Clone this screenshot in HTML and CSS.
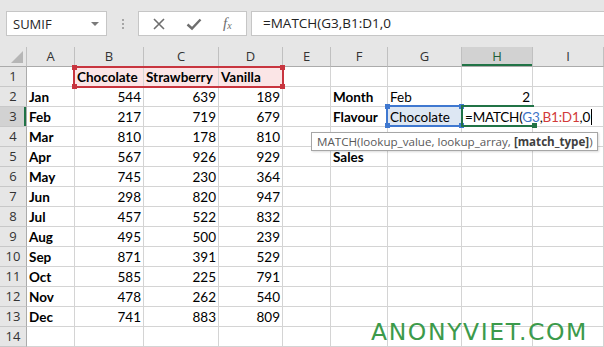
FILE: index.html
```html
<!DOCTYPE html>
<html lang="en">
<head>
  <meta charset="UTF-8">
  <title>MATCH</title>
  <link rel="stylesheet" href="styles.css">
</head>
<body>
  <!-- Formula bar -->
  <div class="formula-bar">
    <div class="name-box">
      <span>SUMIF</span>
      <span class="caret-down"></span>
    </div>
    <div class="grip"><i></i><i></i><i></i></div>
    <div class="fx-buttons">
      <svg class="icon" width="14" height="14" viewBox="0 0 14 14"><path d="M2 2 L12 12 M12 2 L2 12" stroke="#6e6e6e" stroke-width="1.6" fill="none"/></svg>
      <svg class="icon" width="16" height="14" viewBox="0 0 16 14"><path d="M1.5 7.5 L6 11.5 L14.5 2.5" stroke="#6e6e6e" stroke-width="2.4" fill="none"/></svg>
      <span class="fx">f<sub>x</sub></span>
    </div>
    <div class="formula-input">=MATCH(G3,B1:D1,0</div>
  </div>

  <!-- Sheet -->
  <div class="sheet" id="sheet">
    <div class="range-red"><span class="h tl"></span><span class="h tr"></span><span class="h bl"></span><span class="h br"></span></div>
    <div class="range-blue"><span class="h tl"></span><span class="h tr"></span><span class="h bl"></span><span class="h br"></span></div>
    <div class="active-cell"><span class="h br"></span></div>
    <div class="tooltip">MATCH(lookup_value, lookup_array, <b>[match_type]</b>)</div>
  </div>

  <div class="watermark">ANONYVIET.COM</div>

  <script>
    const letters = ["", "A", "B", "C", "D", "E", "F", "G", "H", "I"];
    const months = ["Jan", "Feb", "Mar", "Apr", "May", "Jun", "Jul", "Aug", "Sep", "Oct", "Nov", "Dec"];
    const sales = [
      [544, 639, 189], [217, 719, 679], [810, 178, 810], [567, 926, 929],
      [745, 230, 364], [298, 820, 947], [457, 522, 832], [495, 500, 239],
      [871, 391, 529], [585, 225, 791], [478, 262, 540], [741, 883, 809]
    ];
    const sheet = document.getElementById("sheet");

    function cell(html, cls) {
      return { html: html, cls: cls || "" };
    }

    // header row
    let head = '<div class="row head-row">';
    letters.forEach((l, i) => {
      let cls = i === 0 ? "corner" : "col-head";
      if (l === "H") cls += " active";
      head += `<div class="${cls}">${l}</div>`;
    });
    head += "</div>";

    let body = "";
    for (let r = 1; r <= 14; r++) {
      const cells = [];
      for (let c = 0; c < 9; c++) cells.push(cell(""));
      if (r === 1) {
        cells[1] = cell("Chocolate", "b pink");
        cells[2] = cell("Strawberry", "b pink");
        cells[3] = cell("Vanilla", "b pink");
      }
      if (r >= 2 && r <= 13) {
        cells[0] = cell(months[r - 2], "b");
        sales[r - 2].forEach((v, i) => { cells[i + 1] = cell(v, "num"); });
      }
      if (r === 2) {
        cells[5] = cell("Month", "b");
        cells[6] = cell("Feb");
        cells[7] = cell("2", "num");
      }
      if (r === 3) {
        cells[5] = cell("Flavour", "b");
        cells[6] = cell("Chocolate", "blue");
        cells[7] = cell('=MATCH(<span class="ref-blue">G3</span>,<span class="ref-red">B1:D1</span>,0<span class="cursor"></span>', "editing");
      }
      if (r === 5) cells[5] = cell("Sales", "b");

      body += `<div class="row"><div class="row-head${r === 3 ? " active" : ""}">${r}</div>`;
      cells.forEach(x => { body += `<div class="cell ${x.cls}">${x.html}</div>`; });
      body += "</div>";
    }

    sheet.insertAdjacentHTML("afterbegin", head + body);
  </script>
</body>
</html>
```

FILE: styles.css
```css
/* General */
body {
  margin: 0;
  width: 604px;
  height: 347px;
  overflow: hidden;
  position: relative;
  background-color: white;
  font-family: "Open Sans", sans-serif;
}

/* Formula bar */
.formula-bar {
  height: 47px;
  background-color: #e6e6e6;
  display: flex;
  align-items: flex-start;
  padding: 11px 0 0 6px;
  box-sizing: border-box;
}

.name-box {
  width: 101px;
  height: 25px;
  box-sizing: border-box;
  background-color: white;
  border: 1px solid #c6c6c6;
  display: flex;
  align-items: center;
  justify-content: space-between;
  padding: 0 7px 0 6px;
  font-size: 13px;
  color: #262626;
}

.caret-down {
  width: 0;
  height: 0;
  border-left: 4px solid transparent;
  border-right: 4px solid transparent;
  border-top: 4px solid #7a7a7a;
}

.grip {
  width: 31px;
  height: 25px;
  display: flex;
  flex-direction: column;
  align-items: center;
  justify-content: center;
  gap: 2px;
}

.grip i {
  width: 2px;
  height: 2px;
  background-color: #a6a6a6;
}

.fx-buttons {
  width: 109px;
  height: 25px;
  box-sizing: border-box;
  background-color: white;
  border: 1px solid #c6c6c6;
  display: flex;
  align-items: center;
  padding-left: 13px;
  gap: 20px;
}

.fx {
  font-family: "Liberation Serif", serif;
  font-style: italic;
  font-size: 15px;
  color: #6e6e6e;
  margin-left: 1px;
}

.fx sub {
  font-size: 10px;
  vertical-align: -1px;
}

.formula-input {
  flex: 1;
  height: 25px;
  box-sizing: border-box;
  margin-left: 4px;
  background-color: white;
  border: 1px solid #c6c6c6;
  border-right: none;
  padding-left: 11px;
  font-size: 13.5px;
  line-height: 23px;
  color: #222;
}

/* Sheet grid */
.sheet {
  position: relative;
}

.row {
  display: grid;
  grid-template-columns: 27px 48px 69px 75px 64px 48px 57px 74px 71px 1fr;
  height: 20px;
}

.row > div {
  box-sizing: border-box;
  height: 20px;
  border-right: 1px solid #d4d4d4;
  border-bottom: 1px solid #d4d4d4;
  white-space: nowrap;
}

.head-row > div {
  background-color: #e6e6e6;
  border-right-color: #c0c0c0;
  border-bottom-color: #ababab;
  text-align: center;
  font-size: 13px;
  line-height: 19px;
  color: #333;
}

.corner {
  position: relative;
}

.corner::after {
  content: "";
  position: absolute;
  right: 3px;
  bottom: 3px;
  border-left: 12px solid transparent;
  border-bottom: 12px solid #b6b6b6;
}

.col-head.active {
  background-color: #d2d2d2;
  box-shadow: inset 0 -2px #217346;
  color: #1d5e38;
}

.row-head {
  background-color: #e6e6e6;
  border-right-color: #ababab !important;
  border-bottom-color: #c8c8c8 !important;
  text-align: center;
  font-size: 13px;
  line-height: 19px;
  color: #333;
}

.row-head.active {
  background-color: #d2d2d2;
  box-shadow: inset -2px 0 #217346;
}

.cell {
  font-family: Lato, sans-serif;
  font-size: 13.5px;
  line-height: 20px;
  padding: 0 2px;
  color: black;
}

.cell.b {
  font-weight: bold;
}

.cell.num {
  text-align: right;
}

.cell.pink {
  background-color: #fbe5e6;
}

.cell.blue {
  background-color: #dde7f3;
}

.cell.editing {
  border-right: none;
  padding-left: 3px;
  position: relative;
  z-index: 1;
  letter-spacing: -0.2px;
}

.ref-blue {
  color: #3d74c6;
}

.ref-red {
  color: #d23a3a;
}

.cursor {
  display: inline-block;
  width: 1px;
  height: 16px;
  background-color: black;
  vertical-align: -3px;
  margin-left: 1px;
}

/* Range highlights */
.range-red, .range-blue, .active-cell {
  position: absolute;
  box-sizing: border-box;
  border: 2px solid;
  z-index: 2;
}

.range-red {
  left: 73px;
  top: 19px;
  width: 211px;
  height: 22px;
  border-color: #c8353f;
}

.range-blue {
  left: 386px;
  top: 58px;
  width: 77px;
  height: 22px;
  border-color: #3f78d0;
}

.active-cell {
  left: 461px;
  top: 58px;
  width: 73px;
  height: 22px;
  border-color: #217346;
  border-right: none;
}

.h {
  position: absolute;
  width: 5px;
  height: 5px;
}

.range-red .h { background-color: #c8353f; }
.range-blue .h { background-color: #3f78d0; }
.active-cell .h { background-color: #217346; }

.h.tl { left: -3px; top: -3px; }
.h.tr { right: -3px; top: -3px; }
.h.bl { left: -3px; bottom: -3px; }
.h.br { right: -3px; bottom: -3px; }

/* Function tooltip */
.tooltip {
  position: absolute;
  left: 311px;
  top: 85px;
  width: 287px;
  height: 19px;
  box-sizing: border-box;
  background-color: white;
  border: 1px solid #a6a6a6;
  box-shadow: 1px 1px 2px rgba(0, 0, 0, 0.15);
  padding-left: 5px;
  font-size: 11.6px;
  line-height: 17px;
  color: #595959;
  white-space: nowrap;
  z-index: 3;
}

.tooltip b {
  color: #404040;
}

/* Watermark */
.watermark {
  position: absolute;
  left: 371px;
  top: 320px;
  font-family: "DejaVu Sans", sans-serif;
  font-size: 23.5px;
  line-height: 24px;
  color: #3c9a4b;
  letter-spacing: 1.6px;
  white-space: nowrap;
}
```
